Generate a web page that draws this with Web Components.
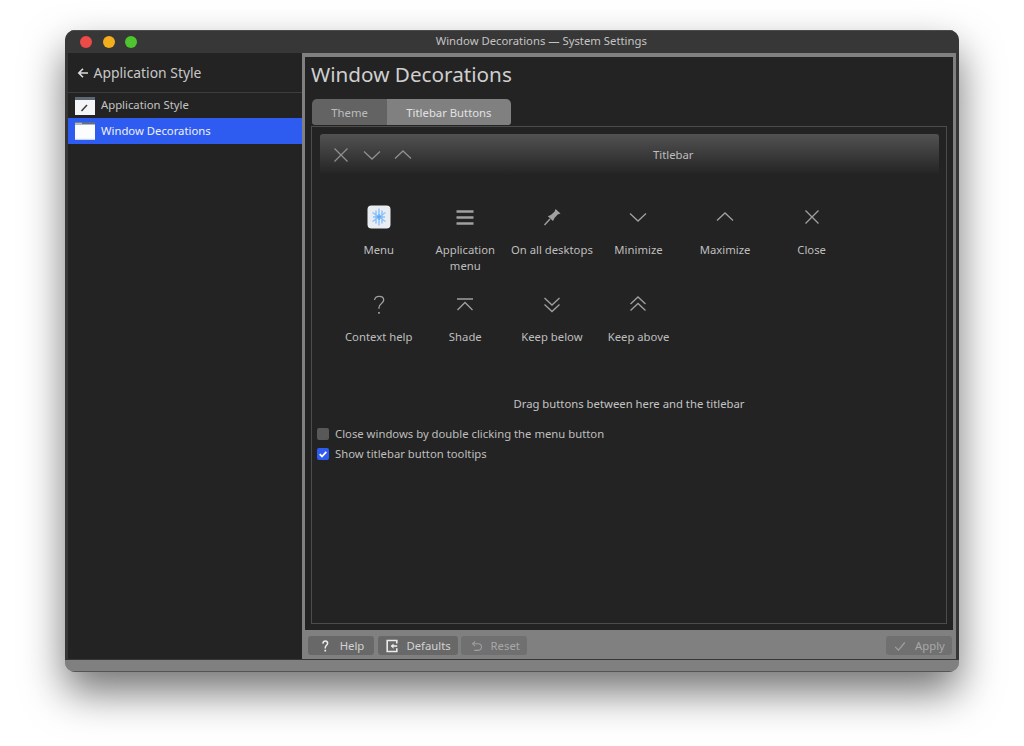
<!DOCTYPE html>
<html>
<head>
<meta charset="utf-8">
<title>Window Decorations — System Settings</title>
<style>
    html, body { margin: 0; height: 746px; overflow: hidden; background: #fff; }
    body { font: 11.3px "Noto Sans", sans-serif; color: #c8c8c8; padding: 30px 65px; box-sizing: border-box; }
</style>
</head>
<body>
<settings-window>
    <settings-sidebar slot="side" heading="Application Style">
        <side-item label="Application Style" icon="style"></side-item>
        <side-item label="Window Decorations" icon="deco" selected></side-item>
    </settings-sidebar>

    <h-title slot="main">Window Decorations</h-title>
    <tab-bar slot="main">
        <tab-item>Theme</tab-item>
        <tab-item active>Titlebar Buttons</tab-item>
    </tab-bar>
    <tab-panel slot="main">
        <titlebar-preview>Titlebar</titlebar-preview>
        <button-grid>
            <button-tile label="Menu" icon="kde"></button-tile>
            <button-tile label="Application menu" icon="appmenu"></button-tile>
            <button-tile label="On all desktops" icon="pin"></button-tile>
            <button-tile label="Minimize" icon="down"></button-tile>
            <button-tile label="Maximize" icon="up"></button-tile>
            <button-tile label="Close" icon="close"></button-tile>
            <button-tile label="Context help" icon="help"></button-tile>
            <button-tile label="Shade" icon="shade"></button-tile>
            <button-tile label="Keep below" icon="below"></button-tile>
            <button-tile label="Keep above" icon="above"></button-tile>
        </button-grid>
        <drag-hint>Drag buttons between here and the titlebar</drag-hint>
        <check-row first>Close windows by double clicking the menu button</check-row>
        <check-row checked>Show titlebar button tooltips</check-row>
    </tab-panel>

    <push-button slot="foot" icon="help">Help</push-button>
    <push-button slot="foot" icon="defaults">Defaults</push-button>
    <push-button slot="foot" icon="reset" disabled>Reset</push-button>
    <footer-gap slot="foot"></footer-gap>
    <push-button slot="foot" icon="check" disabled>Apply</push-button>
</settings-window>

<script>
'use strict'

const ICONS = {
    close: `<path d="M5.5 5.5l13 13M18.5 5.5l-13 13" />`,
    down: `<path d="M4 8.5l8 7.5 8-7.5" />`,
    up: `<path d="M4 15.5l8-7.5 8 7.5" />`,
    appmenu: `<path d="M3.5 6.5h17M3.5 12.5h17M3.5 18.5h17" stroke-width="2.6" />`,
    pin: `<path d="M15.5 4l5 4.5-2.800 1-3.200 3.500-1.500 3-5.200-4.700 3-1.300 3.700-3.300z" fill="currentColor" stroke="none" /><path d="M10 14l-5.500 6" stroke-width="1.400" />`,
    help: `<path d="M7.5 8C7.900 5.500 9.800 4.300 12.200 4.300c2.600 0 4.500 1.500 4.500 3.800 0 3.300-4.700 3.500-4.700 7.400v1.300" /><path d="M12 20v1.800" stroke-width="1.700" />`,
    shade: `<path d="M4 7h16M4.500 18l7.500-7.500 7.500 7.500" />`,
    below: `<path d="M4.500 6l7.500 7 7.500-7M4.500 12.500l7.500 7 7.500-7" />`,
    above: `<path d="M4.500 12l7.500-7 7.500 7M4.500 18.500l7.500-7 7.500 7" />`,
    kde: `<rect x=".5" y=".5" width="23" height="23" rx="4" fill="#e9edf2" stroke="none" />
          <path d="M12 3.500v17M5.500 7.500l13 9M18.500 7.500l-13 9M9 5.500v13M15 5.500v13M6 12h12" stroke="#8cc2fb" stroke-width="1.500" />
          <path d="M12 9v6M10 11l4 2M14 11l-4 2" stroke="#5fa8f5" stroke-width="1.200" />`,
}

const BTN_ICONS = {
    help: `<path d="M5.5 5.200C5.800 3.200 7 2.300 8.300 2.300c1.600 0 2.700 1.100 2.700 2.600 0 2.200-2.700 2.500-2.700 5v.9" stroke-width="1.700" /><path d="M8.300 12.300v2" stroke-width="1.900" />`,
    defaults: `<path d="M13.500 5V1.800H2.500v12.400h11V10.500" stroke-width="1.800" /><path d="M14 8H7.500" stroke-width="1.800" /><path d="M9.800 5L6.500 8l3.300 3z" fill="#ececec" stroke="none" />`,
    reset: `<path d="M5 5.500h5.500a3.700 3.700 0 010 7.500H6" stroke-width="1.200" /><path d="M7 2.800L4 5.500l3 2.700" stroke-width="1.200" />`,
    check: `<path d="M2.500 9l3.700 3.700L13.500 4" stroke-width="1.400" />`,
}

const define = (name, css, html) => {
    customElements.define(name, class extends HTMLElement {
        constructor() {
            super()
            this.attachShadow({mode: 'open'})
        }
        connectedCallback() {
            const a = n => this.getAttribute(n) || ''
            this.shadowRoot.innerHTML = `<style>${css}</style>${typeof html === 'function' ? html(a, this) : html}`
        }
    })
}

define('settings-window', `
    :host { display: flex; flex-direction: column; width: 894px; height: 642px; border-radius: 10px;
        background: #808080; box-shadow: 0 20px 42px rgba(0,0,0,.55); overflow: hidden; }
    .bar { flex: none; height: 23px; display: flex; align-items: center; background: #373737;
        box-shadow: inset 0 1px 0 #4c4c4c; padding: 1px 0 0 15px; box-sizing: border-box; }
    .light { width: 12px; height: 12px; border-radius: 50%; margin-right: 10.5px; }
    .title { flex: 1; text-align: center; margin-left: -24px; margin-top: -3px; color: #c4c4c4; }
    .body { flex: none; height: 607px; display: flex; background: #363636; padding: 0 3px 1px 3px; box-sizing: border-box; }
    .side { flex: none; width: 234px; background: #232323; }
    .right { flex: 1; display: flex; flex-direction: column; background: #808080; padding: 4px 3px 0 3px; }
    .main { flex: none; height: 573px; background: #232323; padding: 0 6px; box-sizing: border-box;
        display: flex; flex-direction: column; }
    .foot { flex: 1; display: flex; align-items: center; gap: 3.5px; padding: 2px 1px 0 3px; }
    .strip { flex: 1; background: #808080; box-shadow: inset 0 -1px 0 #555; }
`, `
    <div class="bar">
        <span class="light" style="background:#ec4b47"></span>
        <span class="light" style="background:#f2ae1c"></span>
        <span class="light" style="background:#4ec42f"></span>
        <span class="title">Window Decorations — System Settings</span>
    </div>
    <div class="body">
        <div class="side"><slot name="side"></slot></div>
        <div class="right">
            <div class="main"><slot name="main"></slot></div>
            <div class="foot"><slot name="foot"></slot></div>
        </div>
    </div>
    <div class="strip"></div>
`)

define('settings-sidebar', `
    :host { display: block; }
    .head { height: 39px; display: flex; align-items: center; padding-left: 9px; gap: 4.5px; font-size: 13.9px; color: #c8c8c8;
        border-bottom: 1px solid #3d3d3d; }
    svg { width: 12px; height: 12px; }
`, a => `
    <div class="head">
        <svg viewBox="0 0 12 12" fill="none" stroke="#dcdcdc" stroke-width="1.600"><path d="M11 6H2M6 1.800L1.800 6 6 10.200" /></svg>
        <span>${a('heading')}</span>
    </div>
    <slot></slot>
`)

define('side-item', `
    :host { display: flex; align-items: center; height: 25px; padding-left: 7px; gap: 6px; color: #c4c4c4; }
    :host([selected]) { height: 26px; background: #2e5cf0; color: #eef0f5; }
    svg { width: 20px; height: 18px; flex: none; }
    span { margin-top: -2px; }
    :host([selected]) span { margin-top: -1px; }
`, a => a('icon') === 'style' ? `
    <svg viewBox="0 0 20 18"><rect width="20" height="18" fill="#f4f5f7" /><rect width="20" height="3" fill="#5d6873" />
        <path d="M6.500 14l5.500-6" stroke="#3a3a3a" stroke-width="1.500" /></svg>
    <span>${a('label')}</span>
` : `
    <svg viewBox="0 0 20 18"><rect width="20" height="18" fill="#fbfcfd" /><rect width="20" height="2.500" fill="#5d6e8c" /><rect y=".8" width="7" height="1" fill="#c8ccd4" /><rect y="16.800" width="20" height="1.200" fill="#c9d6ef" /></svg>
    <span>${a('label')}</span>
`)

define('h-title', `
    :host { display: block; height: 42px; line-height: 34px; font-size: 20.7px; color: #cfcfcf; }
`, `<slot></slot>`)

define('tab-bar', `
    :host { display: flex; height: 26px; margin-left: 1px; align-self: flex-start; border-radius: 5px 5px 3px 3px; overflow: hidden; }
`, `<slot></slot>`)

define('tab-item', `
    :host { display: flex; align-items: center; padding: 0 19.25px; background: #636363; color: #bdbdbd; }
    :host([active]) { background: #808080; color: #e2e2e2; }
`, `<slot></slot>`)

define('tab-panel', `
    :host { display: flex; flex-direction: column; flex: none; height: 498px; border: 1px solid #4c4c4c; box-sizing: border-box;
        margin: 1px 0 0 0; padding: 7px 5px 0 5px; }
`, `<slot></slot>`)

define('titlebar-preview', `
    :host { display: flex; align-items: center; height: 41px; margin: 0 2px 0 3px; padding: 0 0 0 8.5px; flex: none;
        border-radius: 3px 3px 0 0; background: linear-gradient(#525252, #232323); color: #bdbdbd; }
    svg { width: 24px; height: 24px; margin-right: 7px; fill: none; stroke: #8f8f8f; stroke-width: 1.3; flex: none; }
    .t { flex: 1; text-align: center; padding-right: 14px; }
`, () => `
    <svg viewBox="0 0 24 24">${ICONS.close}</svg>
    <svg viewBox="0 0 24 24">${ICONS.down}</svg>
    <svg viewBox="0 0 24 24">${ICONS.up}</svg>
    <span class="t"><slot></slot></span>
`)

define('button-grid', `
    :host { display: grid; grid-template-columns: repeat(6, 86.6px); grid-auto-rows: 87px; padding: 30px 0 0 18.4px; flex: none; }
`, `<slot></slot>`)

define('button-tile', `
    :host { display: flex; flex-direction: column; align-items: center; text-align: center; line-height: 16px; color: #bebebe; }
    svg { width: 24px; height: 24px; fill: none; stroke: #a0a0a0; stroke-width: 1.3; color: #a0a0a0; margin-bottom: 13px; flex: none; }
`, a => `
    <svg viewBox="0 0 24 24">${ICONS[a('icon')]}</svg>
    <span>${a('label')}</span>
`)

define('drag-hint', `
    :host { display: block; text-align: center; line-height: 16px; margin-top: 17px; color: #c4c4c4; }
`, `<slot></slot>`)

define('check-row', `
    :host { display: flex; align-items: center; height: 20px; gap: 6px; color: #bebebe; }
    :host([first]) { margin-top: 12px; }
    .box { width: 12px; height: 12px; border-radius: 2px; background: #585858; flex: none; }
    .on { background: #2e5cf0; }
    svg { display: block; }
    .label { margin-top: -1px; }
`, (a, el) => el.hasAttribute('checked') ? `
    <span class="box on"><svg viewBox="0 0 12 12" width="12" height="12" fill="none" stroke="#fff" stroke-width="1.800"><path d="M2.700 6.200l2.300 2.300 4.300-4.700" /></svg></span>
    <span class="label"><slot></slot></span>
` : `
    <span class="box"></span>
    <span class="label"><slot></slot></span>
`)

define('push-button', `
    :host { display: inline-flex; align-items: center; justify-content: center; box-sizing: border-box; min-width: 66px; height: 19px;
        padding: 0 7px; gap: 8px; background: #686868; color: #d2d2d2; border-radius: 3px; }
    :host([disabled]) { background: #707070; color: #a8a8a8; }
    svg { width: 14px; height: 14px; fill: none; stroke: #ececec; flex: none; }
    :host([disabled]) svg { stroke: #a0a0a0; }
`, a => `
    <svg viewBox="0 0 16 16">${BTN_ICONS[a('icon')]}</svg>
    <slot></slot>
`)

define('footer-gap', `:host { flex: 1; }`, ``)
</script>
</body>
</html>
